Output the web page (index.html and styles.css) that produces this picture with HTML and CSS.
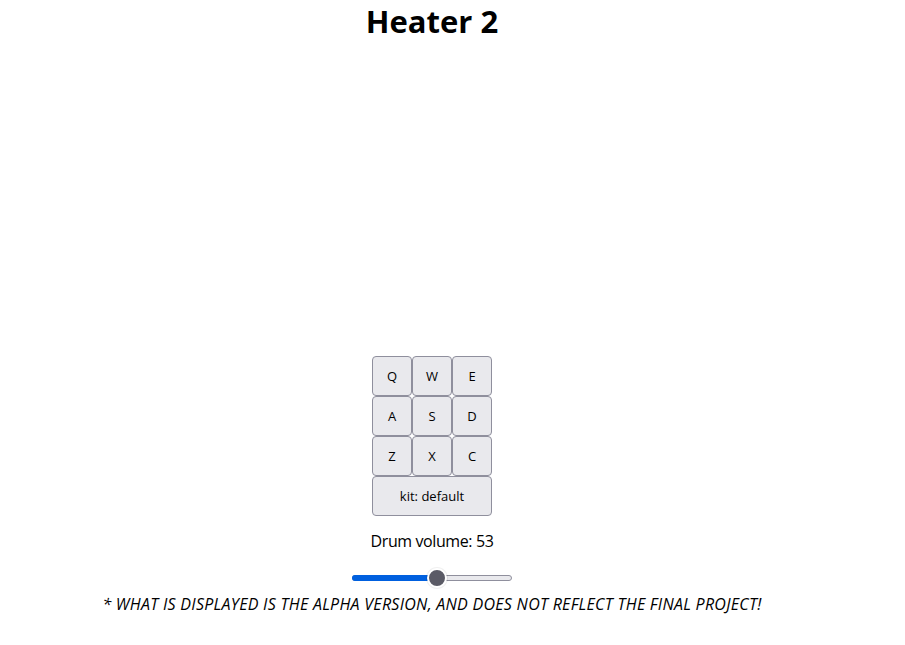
FILE: index.html
```html
<!DOCTYPE html>
<html lang="en">
<head>
<meta charset="utf-8">
<title>Drum Machine</title>
<link rel="stylesheet" href="styles.css">
</head>
<body>
<div class="app">
  <h1 class="title">Heater 2</h1>
  <div class="display"></div>
  <div class="pad">
    <button class="key">Q</button>
    <button class="key">W</button>
    <button class="key">E</button>
    <button class="key">A</button>
    <button class="key">S</button>
    <button class="key">D</button>
    <button class="key">Z</button>
    <button class="key">X</button>
    <button class="key">C</button>
    <button class="key kit">kit: default</button>
  </div>
  <p class="volume">Drum volume: 53</p>
  <div class="slider-wrap">
    <div class="slider">
      <div class="track"></div>
      <div class="fill" style="width:53%"></div>
      <div class="thumb" style="left:53%"></div>
    </div>
  </div>
  <p class="note">* WHAT IS DISPLAYED IS THE ALPHA VERSION, AND DOES NOT REFLECT THE FINAL PROJECT!</p>
</div>
</body>
</html>
```
FILE: styles.css
```css
html, body {
  margin: 0;
  padding: 0;
  background: #ffffff;
}
body {
  font-family: "Open Sans", "Noto Sans", sans-serif;
  color: #000;
}
.app {
  width: 864px;
  display: flex;
  flex-direction: column;
  align-items: center;
  text-align: center;
}
.title {
  margin: 0;
  font-size: 31px;
  line-height: 42px;
  font-weight: 700;
}
.display {
  height: 314px;
}
.pad {
  display: grid;
  grid-template-columns: repeat(3, 40px);
  grid-auto-rows: 40px;
}
.key {
  box-sizing: border-box;
  margin: 0;
  padding: 0;
  background: #e9e9ed;
  border: 1px solid #8f8f9d;
  border-radius: 4px;
  font-family: "Open Sans", "Noto Sans", sans-serif;
  font-size: 13px;
  color: #000;
}
.kit {
  grid-column: 1 / span 3;
}
.volume {
  margin: 16px 0 0;
  font-size: 16px;
  line-height: 19px;
  letter-spacing: -0.4px;
}
.slider-wrap {
  margin-top: 17px;
  height: 20px;
  display: flex;
  align-items: center;
}
.slider {
  position: relative;
  width: 160px;
  height: 20px;
}
.track {
  position: absolute;
  left: 0;
  right: 0;
  top: 7px;
  height: 6px;
  box-sizing: border-box;
  background: #e9e9ed;
  border: 1px solid #8f8f9d;
  border-radius: 3px;
}
.fill {
  position: absolute;
  left: 0;
  top: 7px;
  height: 6px;
  background: #0060df;
  border-radius: 3px;
}
.thumb {
  position: absolute;
  top: 0;
  width: 20px;
  height: 20px;
  margin-left: -10px;
  box-sizing: border-box;
  background: #5b5b66;
  border: 2px solid #ffffff;
  border-radius: 50%;
  box-shadow: 0 0 0 1px rgba(0,0,0,0.06);
}
.note {
  margin: 7px 0 0;
  font-size: 16px;
  line-height: 19px;
  font-style: italic;
  letter-spacing: 0.28px;
  white-space: nowrap;
}
```
